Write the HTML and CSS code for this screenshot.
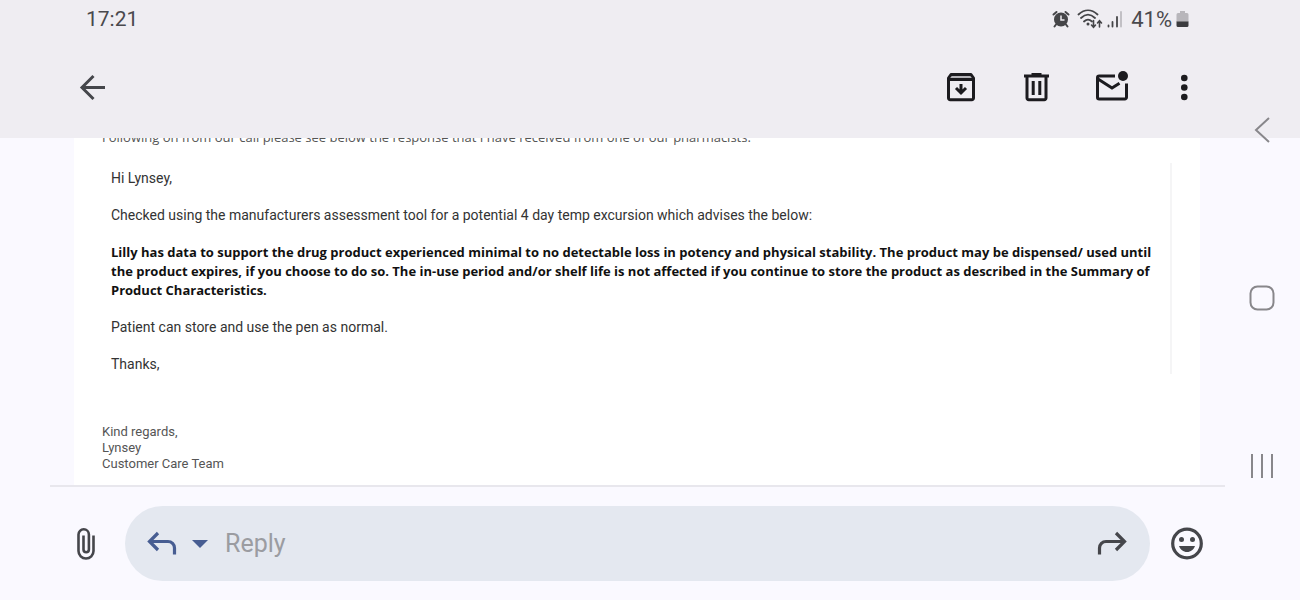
FILE: index.html
```html
<!DOCTYPE html>
<html lang="en">

<head>
    <meta charset="UTF-8">
    <meta name="viewport" content="width=device-width, initial-scale=1">
    <title>Mail</title>
    <link rel="stylesheet" href="styles.css">
</head>

<body>
    <header class="top">
        <!-- Status bar -->
        <div class="status-bar">
            <span>17:21</span>
            <div class="status-icons">
                <svg width="18" height="18" viewBox="0 0 18 18">
                    <circle cx="9" cy="9.500" r="7" fill="#454548"/>
                    <path d="M1.500 4.500 4.500 2M16.500 4.500 13.500 2M4 14.500 2.500 16.500M14 14.500l1.500 2" stroke="#454548" stroke-width="2" stroke-linecap="round"/>
                    <path d="M9 5.500V10h3.500" fill="none" stroke="#efedf2" stroke-width="1.500"/>
                </svg>
                <svg class="wifi" width="26" height="20" viewBox="0 0 26 20" fill="none" stroke="#454548" stroke-width="1.800" stroke-linecap="round">
                    <path d="M1.500 5.500C7.500 0 14.500 0 20.500 5.500M4 9c4.500-4.300 9.500-4.300 14 0M7 12.500c2.500-2.300 5.500-2.300 8 0"/>
                    <circle cx="11" cy="15" r="1.500" fill="#454548" stroke="none"/>
                    <path d="M16.500 11.500v6.500M14.500 16l2 2.300 2-2.300M22.500 18v-6M20.500 14l2-2.300 2 2.300" stroke-width="1.600"/>
                </svg>
                <svg width="16" height="18" viewBox="0 0 16 18" fill="none" stroke="#454548" stroke-width="1.800" stroke-linecap="round">
                    <path d="M1.500 15.500v1M5.500 12v4.500M10 7v9.500"/>
                    <path d="M14 2v14.500" stroke="#bdbbc0"/>
                </svg>
                <span class="battery-level">41%</span>
                <svg width="13" height="18" viewBox="0 0 13 18">
                    <path d="M4 1h5v2h2a1.500 1.500 0 0 1 1.500 1.500V12H.5V4.500A1.500 1.500 0 0 1 2 3h2z" fill="#b8b6bb"/>
                    <path d="M.5 11.500h12v4a1.500 1.500 0 0 1-1.500 1.500H2a1.500 1.500 0 0 1-1.500-1.500z" fill="#3c3c3f"/>
                </svg>
            </div>
        </div>

        <!-- Message toolbar -->
        <div class="toolbar">
            <button type="button" class="icon-btn" aria-label="Back">
                <svg width="32" height="32" viewBox="0 0 32 32" fill="none" stroke="#45464b" stroke-width="3">
                    <path d="M29 16.500H6M17.500 5 6 16.500 17.500 28"/>
                </svg>
            </button>
            <div class="actions">
                <button type="button" class="icon-btn" aria-label="Archive">
                    <svg width="32" height="32" viewBox="0 0 32 32" fill="none" stroke="#1c1b1f" stroke-width="3">
                        <path d="M5.500 3.500h21v4h-21z" fill="#b5b4b9" stroke="none"/>
                        <path d="M3.500 7v20a1.700 1.700 0 0 0 1.700 1.700h21.600a1.700 1.700 0 0 0 1.700-1.700V7L26 3.500H6z" stroke-linejoin="round"/>
                        <path d="M3.500 8.500h25M16 13v9M11 17l5 5 5-5"/>
                    </svg>
                </button>
                <button type="button" class="icon-btn" aria-label="Delete">
                    <svg width="32" height="32" viewBox="0 0 32 32" fill="none" stroke="#1c1b1f" stroke-width="3">
                        <path d="M4 5h25M11.500 3.500h10M7 5v22a1.700 1.700 0 0 0 1.700 1.700h15.600a1.700 1.700 0 0 0 1.700-1.700V5M13.200 10v14M19.800 10v14"/>
                    </svg>
                </button>
                <button type="button" class="icon-btn" aria-label="Mark as unread">
                    <svg width="34" height="32" viewBox="0 0 34 32" fill="none" stroke="#1c1b1f" stroke-width="3">
                        <path d="M20 5H4.200a1.700 1.700 0 0 0-1.700 1.700v19.600A1.700 1.700 0 0 0 4.200 28h25.600a1.700 1.700 0 0 0 1.700-1.700V12.500M3 8l14 9 7.500-4.800"/>
                        <circle cx="28" cy="5" r="5" fill="#1c1b1f" stroke="none"/>
                    </svg>
                </button>
                <button type="button" class="icon-btn" aria-label="More options">
                    <svg width="24" height="32" viewBox="0 0 24 32" fill="#1c1b1f">
                        <circle cx="12.300" cy="7" r="3.300"/>
                        <circle cx="12.300" cy="16.500" r="3.300"/>
                        <circle cx="12.300" cy="26" r="3.300"/>
                    </svg>
                </button>
            </div>
        </div>
    </header>

    <!-- Message body, scrolled down -->
    <main class="message">
        <p class="intro">Following on from our call please see below the response that I have received from one of our pharmacists.</p>
        <blockquote class="quote">
            <p>Hi Lynsey,</p>
            <p>Checked using the manufacturers assessment tool for a potential 4 day temp excursion which advises the below:</p>
            <p class="advice">Lilly has data to support the drug product experienced minimal to no detectable loss in potency and physical stability. The product may be dispensed/ used until the product expires, if you choose to do so. The in-use period and/or shelf life is not affected if you continue to store the product as described in the Summary of Product Characteristics.</p>
            <p>Patient can store and use the pen as normal.</p>
            <p>Thanks,</p>
        </blockquote>
        <p>Kind regards,<br>Lynsey<br>Customer Care Team</p>
    </main>

    <!-- Reply bar -->
    <footer class="reply-bar">
        <button type="button" class="icon-btn" aria-label="Attach file">
            <svg width="24" height="34" viewBox="0 0 24 34" fill="none" stroke="#45464b" stroke-width="2.600">
                <path d="M19.500 8.500V24a7.500 7.500 0 0 1-15 0V7.500a5.200 5.200 0 0 1 10.400 0V22.500a2.700 2.700 0 0 1-5.400 0V8.500"/>
            </svg>
        </button>
        <form class="reply-box">
            <button type="button" class="icon-btn" aria-label="Reply">
                <svg width="32" height="28" viewBox="0 0 32 28" fill="none" stroke="#475d92" stroke-width="3.200">
                    <path d="M12 3 3.500 11.500 12 20M3.500 11.500H22a6.500 6.500 0 0 1 6.500 6.500v6.500"/>
                </svg>
            </button>
            <button type="button" class="icon-btn caret" aria-label="Reply type">
                <svg width="16" height="8" viewBox="0 0 16 8" fill="#475d92">
                    <path d="M0 0h16L8 8z"/>
                </svg>
            </button>
            <input type="text" aria-label="Reply message" placeholder="Reply">
            <button type="button" class="icon-btn" aria-label="Forward">
                <svg width="32" height="28" viewBox="0 0 32 28" fill="none" stroke="#45464b" stroke-width="3.200">
                    <path d="M20 3l8.500 8.500L20 20M28.500 11.500H10A6.500 6.500 0 0 0 3.500 18v6.500"/>
                </svg>
            </button>
        </form>
        <button type="button" class="icon-btn" aria-label="Emoji">
            <svg width="34" height="34" viewBox="0 0 34 34" fill="#45464b">
                <circle cx="17" cy="16.500" r="14.300" fill="none" stroke="#45464b" stroke-width="3.200"/>
                <circle cx="11.500" cy="12.500" r="2.500"/>
                <circle cx="22.500" cy="12.500" r="2.500"/>
                <path d="M9 19h16c-1.200 3.600-4.300 6-8 6s-6.800-2.400-8-6z"/>
            </svg>
        </button>
    </footer>

    <!-- System navigation -->
    <nav class="system-nav">
        <button type="button" class="icon-btn" aria-label="System back">
            <svg width="26" height="26" viewBox="0 0 26 26" fill="none" stroke="#88878b" stroke-width="2">
                <path d="M20 1 7 13l13 12"/>
            </svg>
        </button>
        <button type="button" class="icon-btn" aria-label="Home">
            <svg width="26" height="26" viewBox="0 0 26 26" fill="none" stroke="#88878b" stroke-width="2">
                <rect x="1.500" y="1.500" width="23" height="23" rx="7"/>
            </svg>
        </button>
        <button type="button" class="icon-btn" aria-label="Recent apps">
            <svg width="26" height="26" viewBox="0 0 26 26" fill="none" stroke="#88878b" stroke-width="2">
                <path d="M3 1v24M13 1v24M23 1v24"/>
            </svg>
        </button>
    </nav>
</body>

</html>
```
FILE: styles.css
```css
* {
    box-sizing: border-box;
}

body {
    display: flex;
    flex-direction: column;
    height: 100vh;
    margin: 0;
    background-color: #faf9ff;
    font-family: Roboto, sans-serif;
}

p {
    margin: 0;
}

svg {
    display: block;
}

.icon-btn {
    padding: 0;
    border: 0;
    background: none;
    cursor: pointer;
}

/* Header */
.top {
    flex: none;
    padding: 0 100px 2px 76px;
    background-color: #efedf2;
}

.status-bar {
    display: flex;
    align-items: center;
    justify-content: space-between;
    height: 38px;
    padding: 0 11px 0 10px;
    color: #4a494d;
    font-size: 21px;
}

.status-icons {
    display: flex;
    align-items: center;
    gap: 4px;
}

.wifi {
    margin-left: 3px;
}

.battery-level {
    margin-left: 4px;
    font-size: 22px;
}

.toolbar {
    display: flex;
    align-items: center;
    justify-content: space-between;
    height: 98px;
}

.actions {
    display: flex;
    gap: 43px;
    padding-right: 4px;
}

/* Message */
.message {
    flex: 1;
    min-height: 0;
    overflow: hidden;
    margin: 0 100px 0 74px;
    padding: 0 28px;
    background-color: #fff;
    color: #555;
    font-size: 13px;
    line-height: 16px;
}

.intro {
    margin-top: -9px;
    font-family: "Open Sans", sans-serif;
}

.quote {
    display: flex;
    flex-direction: column;
    gap: 18px;
    margin: 18px 0 50px;
    padding: 6px 8px 0 9px;
    border-right: 2px solid #f5f5f6;
    color: #333;
    font-size: 14px;
    line-height: 19px;
}

.advice {
    color: #111;
    font-family: "Open Sans", sans-serif;
    font-size: 13px;
    font-weight: bold;
}

/* Reply bar */
.reply-bar {
    display: flex;
    flex: none;
    align-items: center;
    gap: 20px;
    height: 115px;
    margin: 0 75px 0 50px;
    padding: 0 21px 0 24px;
    border-top: 2px solid #e8e7ed;
}

.reply-box {
    display: flex;
    flex: 1;
    align-items: center;
    height: 75px;
    margin-left: 7px;
    padding: 0 22px 0 21px;
    border-radius: 38px;
    background-color: #e4e8f0;
}

.caret {
    margin: 0 17px 0 14px;
}

.reply-box input {
    flex: 1;
    min-width: 0;
    padding: 0;
    border: 0;
    outline: 0;
    background: none;
    color: #45464b;
    font-family: inherit;
    font-size: 25px;
}

.reply-box input::placeholder {
    color: #9b9ca1;
}

/* System navigation, over the right edge */
.system-nav {
    position: fixed;
    top: 0;
    right: 0;
    bottom: 0;
    display: flex;
    flex-direction: column;
    align-items: center;
    justify-content: center;
    gap: 142px;
    width: 76px;
    padding-bottom: 5px;
}
```
